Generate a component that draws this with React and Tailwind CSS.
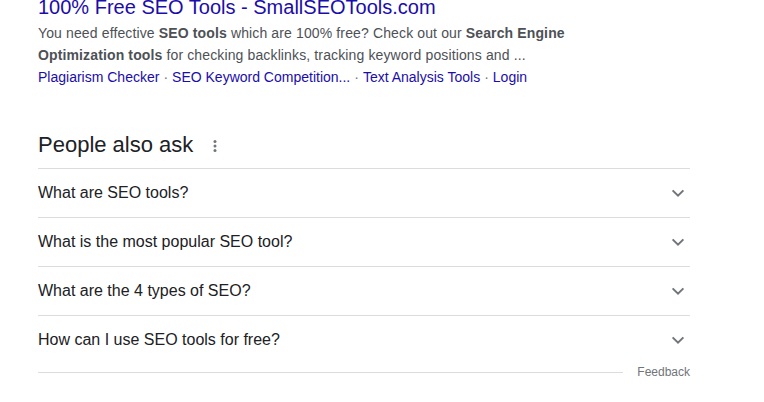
import React from "react";

const Chevron = () => (
  <svg width="24" height="24" viewBox="0 0 24 24" className="text-[#70757a]">
    <path d="M6.6 9.4 L12 14.6 L17.4 9.4" fill="none" stroke="currentColor" strokeWidth="2" />
  </svg>
);

const Dots = () => (
  <svg width="4" height="12" viewBox="0 0 4 12" className="text-[#70757a]">
    <circle cx="2" cy="1.6" r="1.5" fill="currentColor" />
    <circle cx="2" cy="6" r="1.5" fill="currentColor" />
    <circle cx="2" cy="10.4" r="1.5" fill="currentColor" />
  </svg>
);

const Sep = () => <span className="text-[#70757a] px-[4px]">·</span>;

export default function App() {
  const qs = [
    "What are SEO tools?",
    "What is the most popular SEO tool?",
    "What are the 4 types of SEO?",
    "How can I use SEO tools for free?",
  ];
  return (
    <div className="w-[764px] h-[402px] bg-white overflow-hidden font-['Liberation_Sans',Arial,sans-serif]">
      <div className="pl-[38px] w-[690px]">
        <div className="mt-[-6px] text-[20px] leading-[26px] text-[#1a0dab] whitespace-nowrap">
          100% Free SEO Tools - SmallSEOTools.com
        </div>
        <div className="mt-[2px] text-[14px] leading-[22px] tracking-[0.13px] text-[#4d5156] w-[560px]">
          You need effective <b>SEO tools</b> which are 100% free? Check out our <b>Search Engine</b>
          <br />
          <b>Optimization tools</b> for checking backlinks, tracking keyword positions and ...
        </div>
        <div className="mt-[0px] text-[14px] leading-[22px] text-[#1a0dab] whitespace-nowrap">
          <span>Plagiarism Checker</span>
          <Sep />
          <span>SEO Keyword Competition...</span>
          <Sep />
          <span>Text Analysis Tools</span>
          <Sep />
          <span>Login</span>
        </div>

        <div className="mt-[34px] h-[46px] flex items-center text-[22px] leading-[28px] text-[#202124]">
          <span>People also ask</span>
          <span className="ml-[20px] flex items-center pt-[2px]">
            <Dots />
          </span>
        </div>

        <div>
          {qs.map((q) => (
            <div
              key={q}
              className="h-[49px] border-t border-[#dadce0] flex items-center justify-between text-[16px] text-[#202124]"
            >
              <span>{q}</span>
              <span className="flex items-center">
                <Chevron />
              </span>
            </div>
          ))}
        </div>
        <div className="h-[16px] flex items-center">
          <div className="flex-1 h-px bg-[#dadce0]" />
          <span className="ml-[14px] text-[12px] leading-[16px] text-[#70757a]">Feedback</span>
        </div>
      </div>
    </div>
  );
}
